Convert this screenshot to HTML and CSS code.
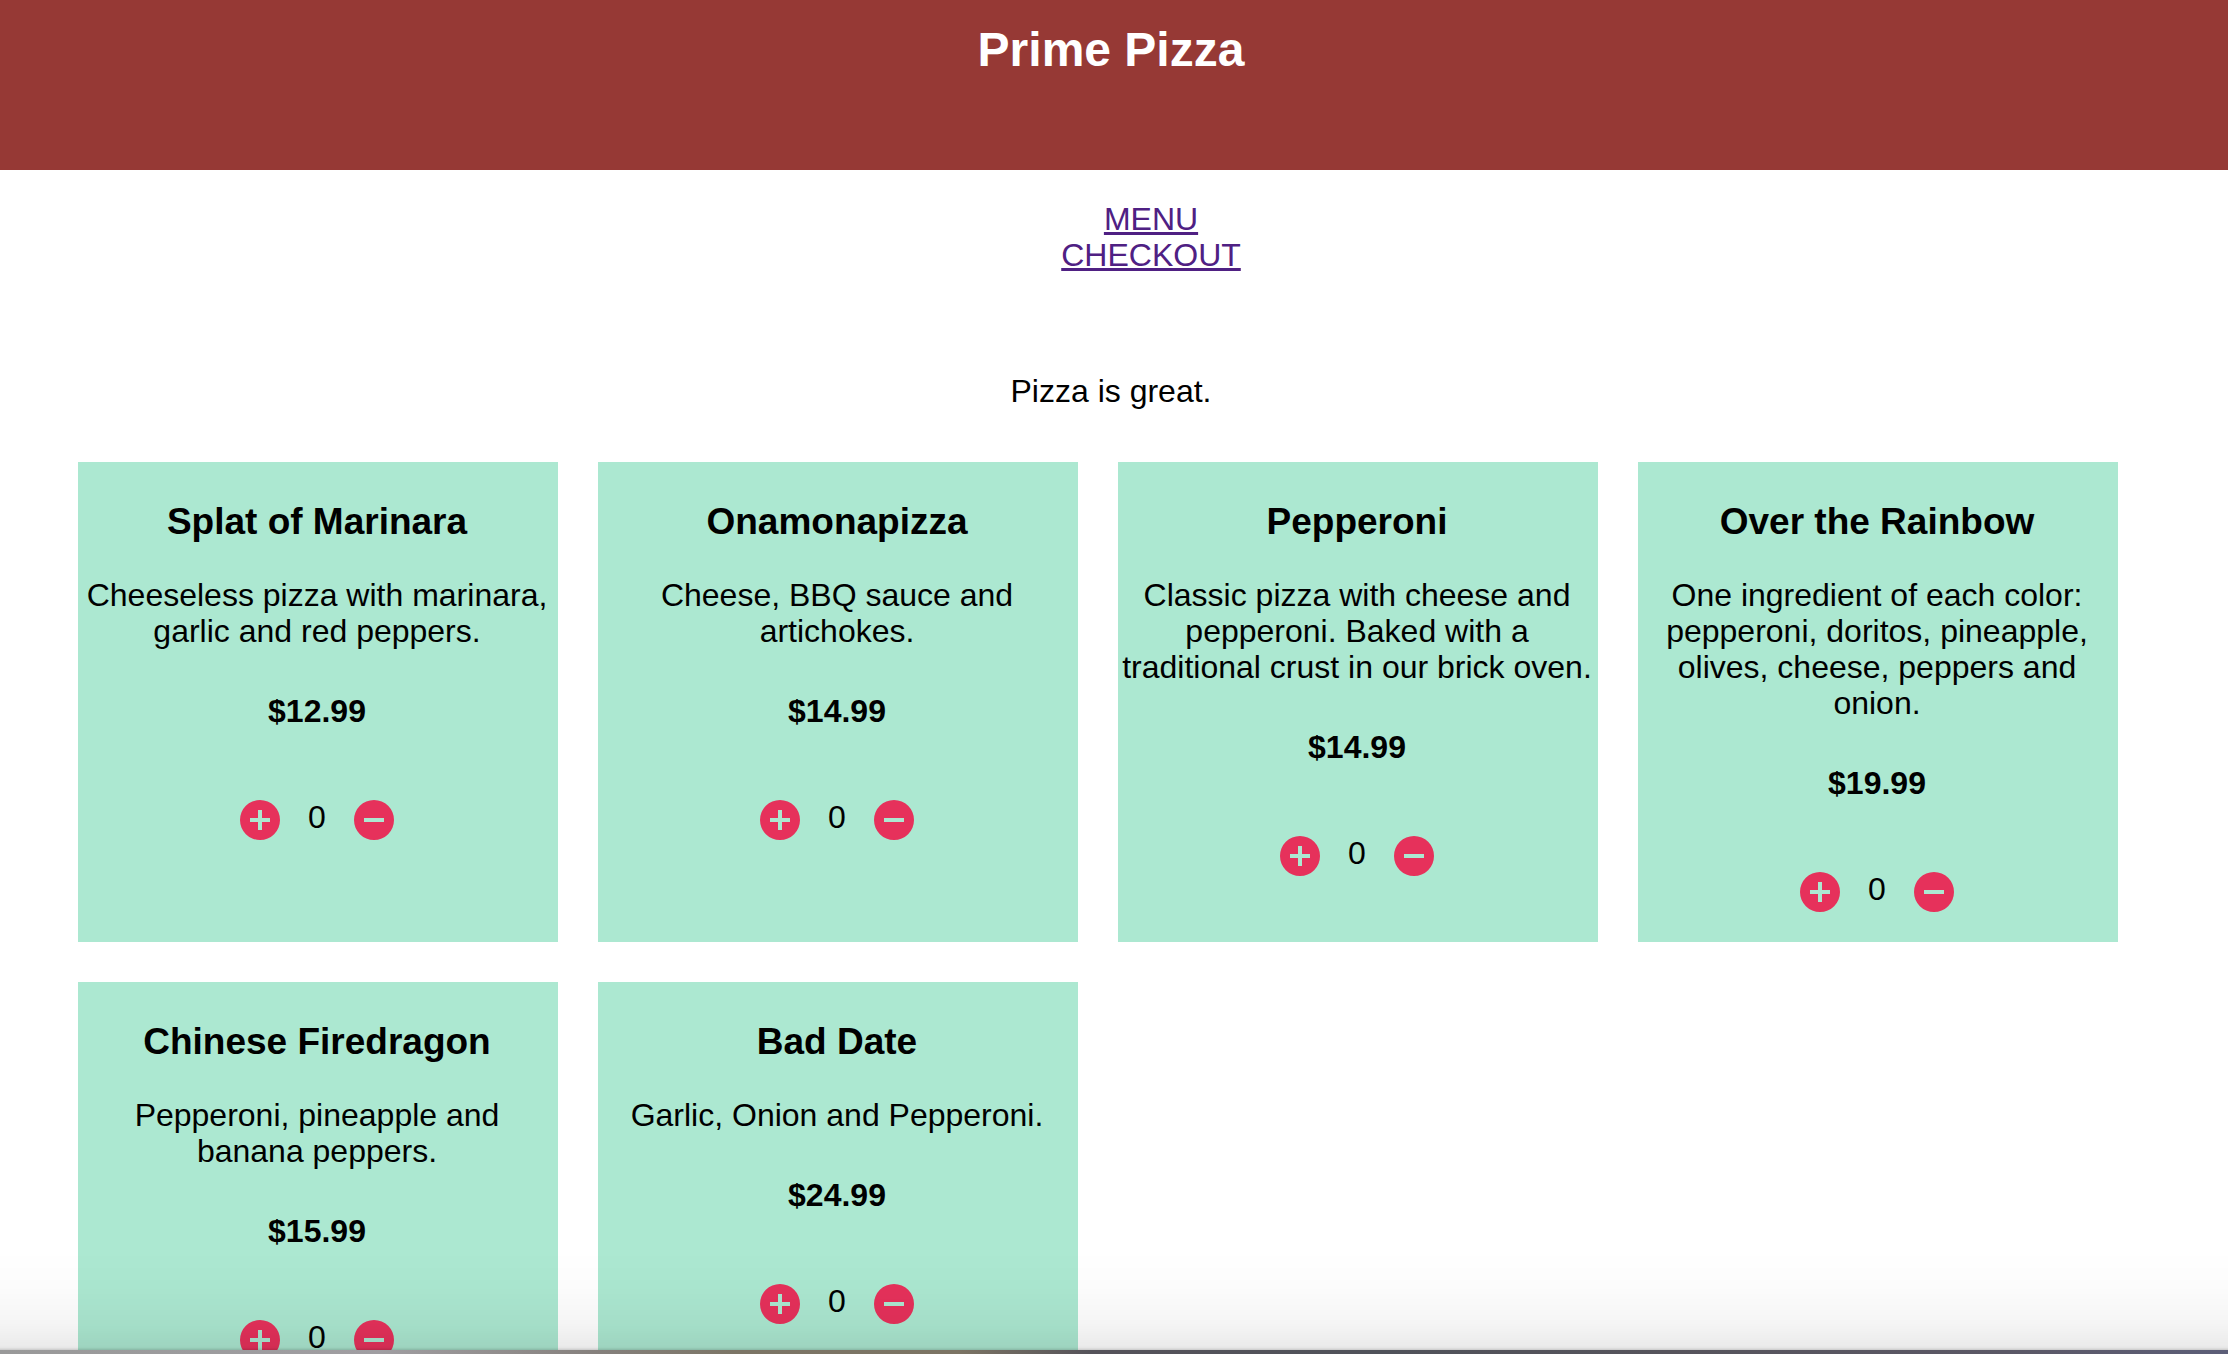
FILE: index.html
```html
<!DOCTYPE html>
<html lang="en">
<head>
<meta charset="utf-8">
<title>Prime Pizza</title>
<link rel="stylesheet" href="styles.css">
</head>
<body>
<header class="banner"><h1 class="title">Prime Pizza</h1></header>
<nav class="nav">
<ul class="links">
<li><a href="#menu">MENU</a></li>
<li><a href="#checkout">CHECKOUT</a></li>
</ul>
</nav>
<p class="tagline">Pizza is great.</p>
<svg class="defs" aria-hidden="true">
<symbol id="plus" viewBox="0 0 40 40"><path fill-rule="evenodd" d="M20 0a20 20 0 1 0 0 40 20 20 0 0 0 0-40ZM18 10h4v8h8v4h-8v8h-4v-8h-8v-4h8Z"/></symbol>
<symbol id="minus" viewBox="0 0 40 40"><path fill-rule="evenodd" d="M20 0a20 20 0 1 0 0 40 20 20 0 0 0 0-40ZM10 18h20v4H10Z"/></symbol>
</svg>
<main class="menu" id="menu">
<article class="card"><h2 class="name">Splat of Marinara</h2><p class="about">Cheeseless pizza with marinara, garlic and red peppers.</p><p class="price">$12.99</p><div class="counter"><button class="step" aria-label="Add"><svg><use href="#plus"/></svg></button><span class="count">0</span><button class="step" aria-label="Remove"><svg><use href="#minus"/></svg></button></div></article>
<article class="card"><h2 class="name">Onamonapizza</h2><p class="about">Cheese, BBQ sauce and artichokes.</p><p class="price">$14.99</p><div class="counter"><button class="step" aria-label="Add"><svg><use href="#plus"/></svg></button><span class="count">0</span><button class="step" aria-label="Remove"><svg><use href="#minus"/></svg></button></div></article>
<article class="card"><h2 class="name">Pepperoni</h2><p class="about">Classic pizza with cheese and pepperoni. Baked with a traditional crust in our brick oven.</p><p class="price">$14.99</p><div class="counter"><button class="step" aria-label="Add"><svg><use href="#plus"/></svg></button><span class="count">0</span><button class="step" aria-label="Remove"><svg><use href="#minus"/></svg></button></div></article>
<article class="card"><h2 class="name">Over the Rainbow</h2><p class="about">One ingredient of each color: pepperoni, doritos, pineapple, olives, cheese, peppers and onion.</p><p class="price">$19.99</p><div class="counter"><button class="step" aria-label="Add"><svg><use href="#plus"/></svg></button><span class="count">0</span><button class="step" aria-label="Remove"><svg><use href="#minus"/></svg></button></div></article>
<article class="card"><h2 class="name">Chinese Firedragon</h2><p class="about">Pepperoni, pineapple and banana peppers.</p><p class="price">$15.99</p><div class="counter"><button class="step" aria-label="Add"><svg><use href="#plus"/></svg></button><span class="count">0</span><button class="step" aria-label="Remove"><svg><use href="#minus"/></svg></button></div></article>
<article class="card"><h2 class="name">Bad Date</h2><p class="about">Garlic, Onion and Pepperoni.</p><p class="price">$24.99</p><div class="counter"><button class="step" aria-label="Add"><svg><use href="#plus"/></svg></button><span class="count">0</span><button class="step" aria-label="Remove"><svg><use href="#minus"/></svg></button></div></article>
</main>
<div class="shade"></div>
</body>
</html>
```
FILE: styles.css
```css
* { box-sizing: border-box; }
html { scrollbar-width: none; }
body {
  margin: 0;
  font: 32px/36px "Liberation Sans", Arial, sans-serif;
  text-align: center;
  color: #000;
  background: #fff;
}
.banner {
  height: 170px;
  padding: 21px 6px 0 0;
  background: #963935;
  color: #fff;
}
.title { margin: 0; font-size: 48px; line-height: 58px; }
.nav { padding: 31px 6px 0 0; }
.links { margin: 0; padding: 0 0 0 80px; list-style: none; }
.links a { color: #4f2083; }
.tagline { margin: 100px 0 0; padding-right: 6px; }
.defs { display: none; }
.menu {
  display: flex;
  flex-wrap: wrap;
  gap: 40px;
  padding: 53px 78px;
}
.card {
  width: 480px;
  height: 480px;
  padding: 39px 2px 0 0;
  background: #ace8d1;
}
.name { margin: 0; font-size: 37px; line-height: 42px; }
.about { margin: 34px 0 0; }
.price { margin: 44px 0 0; font-weight: bold; }
.counter {
  display: flex;
  justify-content: center;
  gap: 28px;
  margin-top: 70px;
}
.step {
  width: 40px;
  height: 40px;
  margin-top: 1px;
  padding: 0;
  border: 0;
  background: none;
  cursor: pointer;
}
.step svg { display: block; width: 40px; height: 40px; fill: #e6315b; }

/* Soft shadow and coloured rule along the bottom of the window */
.shade {
  position: fixed;
  inset: auto 0 0;
  height: 104px;
  pointer-events: none;
  background:
    linear-gradient(90deg, #999, #a09ea2 17%, #85807c 27%, #7c7566 33%, #7c7464 43%, #55535a 49%, #50525a 62%, #56545c 75%, #5b5866 90%, #5c5e78) bottom / 100% 4px no-repeat,
    linear-gradient(rgba(0, 0, 0, 0), rgba(0, 0, 0, .01) 35%, rgba(0, 0, 0, .04) 70%, rgba(0, 0, 0, .08) 92%, rgba(0, 0, 0, .1) 94%, rgba(0, 0, 0, .2) 96%);
}
```
